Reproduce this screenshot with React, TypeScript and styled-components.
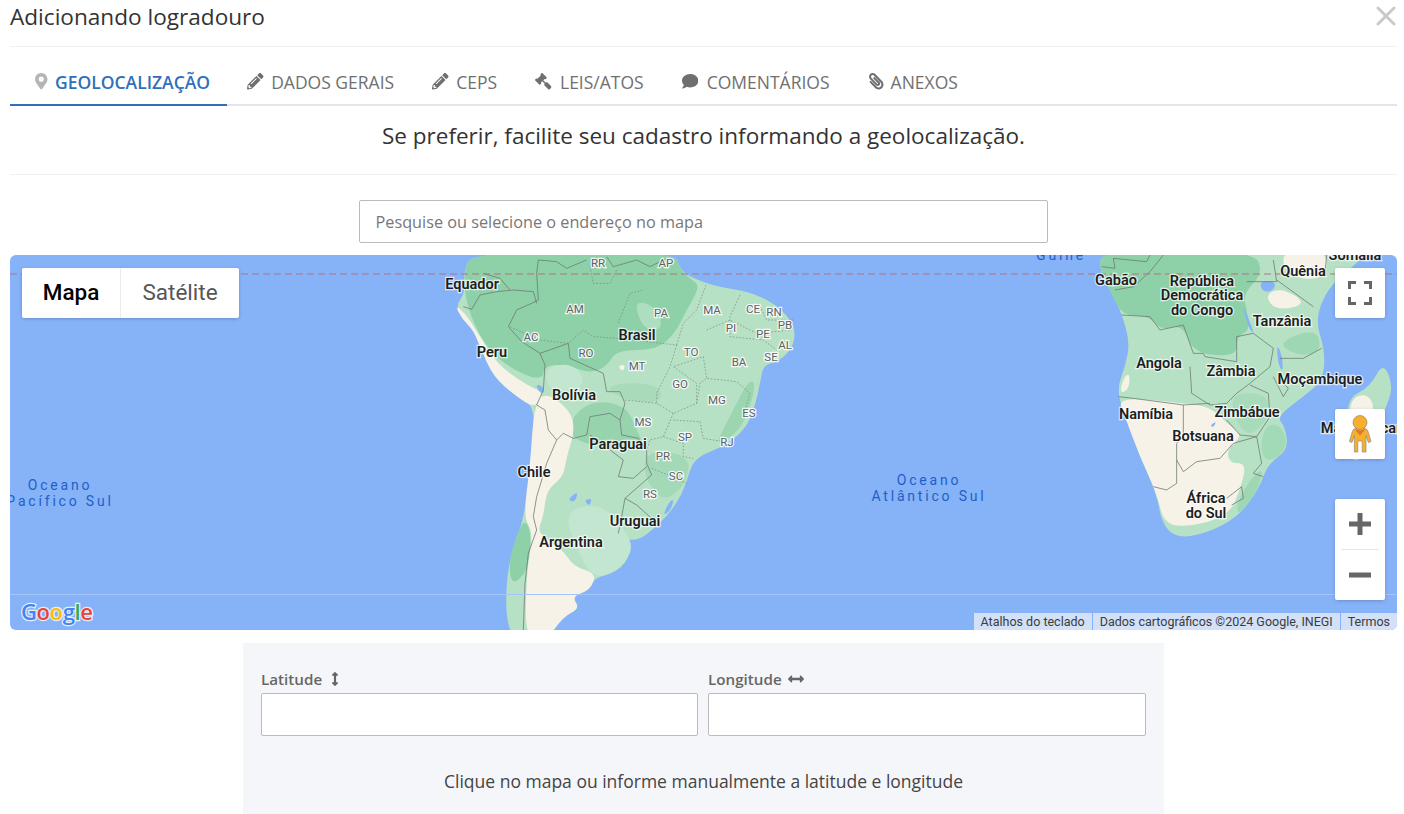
import * as React from 'react';
import styled, { createGlobalStyle } from 'styled-components';
import {
  FaMapMarkerAlt,
  FaPencilAlt,
  FaGavel,
  FaComment,
  FaPaperclip,
  FaArrowsAltV,
  FaArrowsAltH,
} from 'react-icons/fa';
import { X } from 'lucide-react';

const MirroredGavel = styled(FaGavel)`
  transform: scaleX(-1);
`;

const MirroredClip = styled(FaPaperclip)`
  transform: scaleX(-1);
`;

const tabs = [
  { label: 'Geolocalização', icon: <FaMapMarkerAlt />, iconBox: 22, active: true },
  { label: 'Dados gerais', icon: <FaPencilAlt />, iconBox: 24 },
  { label: 'Ceps', icon: <FaPencilAlt />, iconBox: 24 },
  { label: 'Leis/Atos', icon: <MirroredGavel />, iconBox: 25 },
  { label: 'Comentários', icon: <FaComment />, iconBox: 25 },
  { label: 'Anexos', icon: <MirroredClip />, iconBox: 23 },
];

const countries: [string, number, number][] = [
  ['Equador', 472, 284], ['Peru', 492, 352], ['Brasil', 637, 335], ['Bolívia', 574, 395],
  ['Paraguai', 618, 444], ['Chile', 534, 472], ['Uruguai', 635, 521], ['Argentina', 571, 542],
  ['Gabão', 1116, 280], ['República', 1202, 281], ['Democrática', 1202, 295], ['do Congo', 1202, 310],
  ['Quênia', 1303, 271], ['Somália', 1355, 255], ['Tanzânia', 1282, 321], ['Angola', 1159, 363],
  ['Zâmbia', 1231, 371], ['Moçambique', 1320, 379], ['Namíbia', 1146, 414], ['Zimbábue', 1247, 412],
  ['Botsuana', 1203, 436], ['África', 1206, 498], ['do Sul', 1206, 513], ['Madagascar', 1361, 428],
];

const states: [string, number, number][] = [
  ['RR', 598, 263], ['AP', 666, 263], ['AM', 575, 309], ['PA', 661, 313], ['MA', 712, 310],
  ['CE', 753, 309], ['RN', 774, 312], ['PB', 785, 325], ['PI', 731, 328], ['PE', 763, 334],
  ['AL', 785, 345], ['SE', 771, 357], ['AC', 531, 337], ['RO', 586, 353], ['TO', 691, 352],
  ['MT', 637, 366], ['BA', 739, 362], ['GO', 680, 384], ['MG', 717, 400], ['ES', 749, 413],
  ['MS', 643, 422], ['SP', 685, 437], ['RJ', 727, 442], ['PR', 663, 456], ['SC', 676, 476],
  ['RS', 650, 494],
];

const oceans: [string, number, number][] = [
  ['Oceano', 60, 485], ['Pacífico Sul', 60, 501], ['Oceano', 929, 480], ['Atlântico Sul', 929, 496],
];

// arredonda os cantos do poligono passando pelos pontos medios
const smooth = (points: string) => {
  const pts = points.split(' ').map((p) => p.split(',').map(Number));
  const mid = (a: number[], b: number[]) => [(a[0] + b[0]) / 2, (a[1] + b[1]) / 2];
  const start = mid(pts[pts.length - 1], pts[0]);
  let d = `M${start[0]} ${start[1]}`;
  pts.forEach((p, i) => {
    const m = mid(p, pts[(i + 1) % pts.length]);
    d += `Q${p[0]} ${p[1]} ${m[0]} ${m[1]}`;
  });
  return `${d}Z`;
};

const Land = ({ points, fill, opacity }: { points: string; fill: string; opacity?: number }) => (
  <path d={smooth(points)} fill={fill} fillOpacity={opacity} />
);

const FOREST = '#8ed1a8';
const GRASS = '#b7e1c5';
const PALE = '#c3e6d0';
const SAND = '#f6f2e7';
const WATER = '#86b2f7';

const App = () => {
  return (
    <>
      <GlobalStyle />
      <Page>
        <Header>
          <Title>Adicionando logradouro</Title>
          <CloseButton>
            <X size={32} strokeWidth={2.2} />
          </CloseButton>
        </Header>

        <TabBar>
          {tabs.map((tab) => (
            <Tab key={tab.label} $active={tab.active}>
              <TabIcon $box={tab.iconBox}>{tab.icon}</TabIcon>
              {tab.label}
            </Tab>
          ))}
        </TabBar>

        <Lead>Se preferir, facilite seu cadastro informando a geolocalização.</Lead>

        <SearchRow>
          <SearchInput placeholder="Pesquise ou selecione o endereço no mapa" />
        </SearchRow>

        <MapFrame>
          <MapDrawing />

          <MapTypeControl>
            <MapTypeButton $active>Mapa</MapTypeButton>
            <MapTypeButton>Satélite</MapTypeButton>
          </MapTypeControl>

          <FullscreenButton>
            <svg width="24" height="24" viewBox="0 0 24 24" fill="none" stroke="#666" strokeWidth="3">
              <path d="M1.5 8V1.5H8M16 1.5h6.5V8M22.5 16v6.5H16M8 22.5H1.5V16" />
            </svg>
          </FullscreenButton>

          <PegmanButton>
            <svg width="24" height="38" viewBox="0 0 24 38">
              <path
                d="M8 13.500h8c2.200 0 3.400 1 4 3l3 10-2.600 1-2.400-7V37h-3.800V26h-4.400v11H6.400V20.500l-2.400 7-2.600-1 3-10c.6-2 1.800-3 4-3z"
                fill="#f8b02c"
                stroke="#8f8a7c"
                strokeWidth="0.7"
              />
              <circle cx="12" cy="7.500" r="7" fill="#f8b02c" stroke="#8f8a7c" strokeWidth="0.7" />
              <path d="M6.500 14.200 12 20.500l5.500-6.300L12 15.500z" fill="#dc7a2c" />
            </svg>
          </PegmanButton>

          <ZoomControl>
            <ZoomButton>
              <svg width="24" height="24" viewBox="0 0 24 24" fill="#666">
                <path d="M9.500 1h5v8.500H23v5h-8.500V23h-5v-8.500H1v-5h8.500z" />
              </svg>
            </ZoomButton>
            <ZoomDivider />
            <ZoomButton>
              <svg width="24" height="24" viewBox="0 0 24 24" fill="#666">
                <path d="M1 9.500h22v5H1z" />
              </svg>
            </ZoomButton>
          </ZoomControl>

          <Attribution>
            <AttributionItem>Atalhos do teclado</AttributionItem>
            <AttributionItem>Dados cartográficos ©2024 Google, INEGI</AttributionItem>
            <AttributionItem>Termos</AttributionItem>
          </Attribution>
        </MapFrame>

        <CoordPanel>
          <CoordFields>
            <Field>
              <FieldLabel>
                Latitude <FaArrowsAltV size={14} />
              </FieldLabel>
              <TextInput />
            </Field>
            <Field>
              <FieldLabel>
                Longitude <FaArrowsAltH size={16} />
              </FieldLabel>
              <TextInput />
            </Field>
          </CoordFields>
          <Hint>Clique no mapa ou informe manualmente a latitude e longitude</Hint>
        </CoordPanel>
      </Page>
    </>
  );
};

const MapDrawing = () => (
  <MapSvg viewBox="10 255 1387 375">
    <rect x="10" y="255" width="1387" height="375" fill={WATER} />

    {/* America do Sul, coordenadas em 3x */}
    <g transform="translate(430 250) scale(0.33333)">
      <Land
        fill={GRASS}
        points="125,5 100,70 105,130 78,165 95,205 130,240 150,290 190,380 260,440 315,470 305,600 285,800 235,930 225,1090 250,1170 350,1170 400,1100 450,1075 425,1040 480,1020 490,985 565,965 605,910 565,860 620,875 680,830 735,770 770,700 790,625 880,590 945,540 975,470 990,400 1000,345 1045,335 1092,290 1095,225 1040,165 960,125 860,110 790,85 750,60 735,5"
      />
      <Land
        fill={FOREST}
        points="125,5 100,70 110,170 160,280 230,350 335,395 345,345 410,345 480,370 530,350 560,300 680,300 735,250 770,180 810,110 785,88 750,60 735,5"
      />
      <Land fill={FOREST} points="430,490 500,450 590,470 620,540 640,580 560,600 480,585 420,560" opacity={0.8} />
      <Land fill={FOREST} points="850,595 940,535 980,400 955,390 900,500" opacity={0.7} />
      <Land fill={FOREST} points="650,600 780,615 770,700 700,760 640,680" opacity={0.45} />
      <Land fill={FOREST} points="280,800 305,850 295,960 245,1010 235,930" />
      <Land fill={FOREST} points="530,420 590,450 680,460 700,430 660,400 560,400" opacity={0.4} />
      <Land fill={PALE} points="400,780 520,760 600,860 605,910 560,965 490,985 440,900" />
      <Land fill={PALE} points="350,350 430,340 470,400 400,430 350,410" />
      <Land fill={PALE} points="610,150 680,170 700,240 640,240" opacity={0.6} />
      <Land fill={SAND} points="75,165 95,205 130,240 150,290 190,380 260,440 315,475 345,430 280,400 200,340 150,260 110,195" />
      <Land
        fill={SAND}
        points="312,470 345,425 420,480 435,540 410,620 400,680 350,720 340,800 320,850 400,900 430,950 500,970 480,1020 425,1040 450,1075 400,1100 350,1170 285,1170 290,960 310,850 280,800 300,650"
      />
      <Land fill={GRASS} points="360,770 385,750 390,790 365,810" />
      <Land fill={SAND} points="568,345 585,345 582,362 568,358" />
      <Land fill={WATER} points="318,403 338,408 344,430 325,424" />
      <Land fill={WATER} points="462,750 487,745 478,770" />
      <Land fill={WATER} points="412,750 445,722 435,757" />
      <Land fill={WATER} points="715,760 732,745 722,782 698,798" />
      <NationBorders points="325,30 320,70 325,150 305,160 260,180 235,230 275,275 330,310 415,280 420,325 520,370 530,425 570,425 585,460 570,510 575,555 625,565 650,600 650,640 665,675 585,745 575,800 565,850" />
      <NationBorders points="100,170 125,178 150,135 200,125 250,120 310,125 320,160" />
      <NationBorders points="160,70 210,85 240,120" />
      <NationBorders points="330,310 345,345 340,420 320,465 345,480 355,540 380,570 400,550 430,565 470,555 480,500 540,490 570,510" />
      <NationBorders points="480,555 540,600 580,630 565,680 610,685 650,650" />
      <NationBorders points="380,570 350,640 320,740 310,800 320,840 295,910 285,1000 280,1140" />
      <NationBorders points="585,745 620,765 670,810" />
      <NationBorders points="325,30 380,35 410,55 470,30" />
      <NationBorders points="530,20 550,50 620,30 660,50 710,25" />
      <StateBorders points="565,220 600,130 640,120" />
      <StateBorders points="240,230 330,270 415,280 460,240 490,260 560,265 740,285" />
      <StateBorders points="740,285 760,220 800,180 830,100" />
      <StateBorders points="740,285 720,350 680,430 680,460 730,490 800,460 810,400 830,385 920,395 960,430 940,500" />
      <StateBorders points="730,490 700,560 660,570 650,600" />
      <StateBorders points="585,450 680,460" />
      <StateBorders points="700,560 760,580 760,620 790,625" />
      <StateBorders points="730,510 810,515 820,565 880,575" />
      <StateBorders points="800,460 800,400 730,350 820,320 830,385" />
      <StateBorders points="930,135 900,200 900,260 1000,270 1040,300" />
      <StateBorders points="985,160 1010,210 1090,210" />
      <StateBorders points="830,240 900,210 980,250 1085,240" />
      <StateBorders points="665,655 750,690 770,700" />
      <StateBorders points="480,50 490,100 540,100 560,60" />
    </g>

    {/* Africa */}
    <g transform="translate(1050 250) scale(0.33333)">
      <Land
        fill={GRASS}
        points="155,0 148,60 185,130 215,190 240,280 225,350 200,420 225,500 270,620 320,730 335,820 380,865 470,850 565,800 625,720 655,640 715,600 705,530 680,500 760,440 820,390 825,300 795,210 835,110 920,40 955,0"
      />
      <Land fill={FOREST} points="155,0 148,60 185,130 215,195 300,200 330,240 400,225 430,310 560,320 560,260 600,240 590,180 580,130 640,70 610,0" />
      <Land fill={FOREST} points="690,290 760,320 815,300 800,240 720,260" opacity={0.6} />
      <Land fill={FOREST} points="540,430 650,430 660,500 600,560 560,520" opacity={0.4} />
      <Land fill={FOREST} points="650,520 700,530 712,600 650,640 630,590" opacity={0.5} />
      <Land fill={FOREST} points="565,800 625,720 640,650 600,690 560,760" opacity={0.6} />
      <Land
        fill={SAND}
        points="202,440 400,460 480,470 530,520 580,555 530,600 540,640 590,640 570,720 540,790 450,825 345,830 320,730 270,620 225,500"
      />
      <Land fill={SAND} points="650,130 700,115 770,160 700,180 660,165" />
      <Land fill={SAND} points="700,0 830,0 830,80 760,90 700,60" />
      <Land fill={SAND} points="222,380 240,370 236,420 208,430" />
      <Land fill={GRASS} points="1000,335 1030,410 1005,480 975,560 930,635 895,625 890,500 900,440 960,410" />
      <Land fill={SAND} points="905,445 950,430 975,470 950,540 905,590 898,500" />
      <Land fill={WATER} points="628,93 677,93 672,122 638,127" />
      <Land fill={WATER} points="680,280 698,320 698,368 684,340" />
      <Land fill={WATER} points="578,170 585,180 614,252 598,240" />
      <Land fill={WATER} points="480,527 500,513 490,532" />
      <NationBorders points="155,50 195,55 190,25 240,30 290,35 300,15" />
      <NationBorders points="195,120 250,110 300,65 340,15" />
      <NationBorders points="215,195 300,200 330,240 400,225 430,310 460,310 465,320 560,335 560,260 610,250 670,295 660,350 600,400 560,430 530,460" />
      <NationBorders points="420,350 425,430 480,465 530,460" />
      <NationBorders points="205,440 250,445 400,465 480,460" />
      <NationBorders points="400,465 400,560 380,580 380,630 400,665 440,635 510,625 550,580 620,560 660,500 655,430 600,405" />
      <NationBorders points="380,630 380,700 350,720 310,710" />
      <NationBorders points="620,560 635,640 610,670 640,680" />
      <NationBorders points="530,510 570,555 620,560" />
      <NationBorders points="690,325 760,325 815,295" />
      <NationBorders points="680,90 790,170" />
      <NationBorders points="590,95 680,95 670,30" />
      <NationBorders points="830,15 825,70" />
      <NationBorders points="670,380 700,440 715,415 700,400" />
      <NationBorders points="530,745 575,710 580,745 545,765" />
    </g>

    <EquatorLine x1="10" y1="274" x2="1397" y2="274" />
    <TropicLine x1="10" y1="594.5" x2="1397" y2="594.5" />

    {oceans.map(([name, x, y]) => (
      <OceanLabel key={name} x={x} y={y}>
        {name}
      </OceanLabel>
    ))}
    <OceanLabel x={1061} y={255}>
      Guiné
    </OceanLabel>
    {states.map(([name, x, y]) => (
      <StateLabel key={name} x={x} y={y}>
        {name}
      </StateLabel>
    ))}
    {countries.map(([name, x, y]) => (
      <CountryLabel key={name} x={x} y={y}>
        {name}
      </CountryLabel>
    ))}

    <GoogleMark x="21" y="620">
      <tspan fill="#4285f4">G</tspan>
      <tspan fill="#ea4335">o</tspan>
      <tspan fill="#fbbc05">o</tspan>
      <tspan fill="#4285f4">g</tspan>
      <tspan fill="#34a853">l</tspan>
      <tspan fill="#ea4335">e</tspan>
    </GoogleMark>
  </MapSvg>
);

const GlobalStyle = createGlobalStyle`
  html, body {
    margin: 0;
    height: 814px;
    overflow: hidden;
    background: #fff;
    font-family: "Open Sans", sans-serif;
  }
`;

const Page = styled.div`
  padding: 0 7px 0 10px;
  color: #333;
`;

const Header = styled.div`
  display: flex;
  justify-content: space-between;
  height: 46px;
  border-bottom: 1px solid #f1f1f3;
`;

const Title = styled.h4`
  margin: 0;
  font-size: 22.6px;
  font-weight: 400;
  line-height: 34px;
  color: #333;
`;

const CloseButton = styled.div`
  color: #c9c9c9;
  height: 32px;
  margin-right: -5px;
`;

const TabBar = styled.div`
  display: flex;
  height: 57px;
  border-bottom: 2px solid #e4e5ea;
`;

const Tab = styled.div<{ $active?: boolean }>`
  display: flex;
  align-items: center;
  height: 59px;
  box-sizing: border-box;
  padding: 12px 19px 0;
  font-size: 17.5px;
  text-transform: uppercase;
  font-weight: ${(p) => (p.$active ? 600 : 400)};
  color: ${(p) => (p.$active ? '#2f6fbb' : '#707070')};
  border-bottom: 2px solid ${(p) => (p.$active ? '#2f6fbb' : 'transparent')};

  &:first-child {
    padding-left: 23px;
    padding-right: 17px;
  }

  &:nth-child(2) {
    padding-left: 20px;
  }
`;

const TabIcon = styled.span<{ $box: number }>`
  display: inline-flex;
  width: ${(p) => p.$box}px;
  font-size: 16.5px;
  color: #6f6f6f;

  ${Tab}:first-child & {
    color: #b5b5b5;
  }
`;

const Lead = styled.div`
  height: 69px;
  line-height: 60px;
  text-align: center;
  font-size: 22.5px;
  color: #333;
  border-bottom: 1px solid #eff0f2;
  box-sizing: border-box;
`;

const SearchRow = styled.div`
  display: flex;
  justify-content: center;
  padding: 25px 0 12px;
  margin-right: 1px;
`;

const SearchInput = styled.input`
  width: 689px;
  height: 43px;
  box-sizing: border-box;
  padding: 0 16px;
  border: 1px solid #bbb;
  border-radius: 2px;
  font-family: "Open Sans", sans-serif;
  font-size: 16.25px;

  &::placeholder {
    color: #777;
    opacity: 1;
  }
`;

const MapFrame = styled.div`
  position: relative;
  height: 375px;
  border-radius: 6px;
  overflow: hidden;
  font-family: Roboto, sans-serif;
`;

const MapSvg = styled.svg`
  display: block;
  width: 100%;
  height: 100%;
`;

const NationBorders = styled.polyline`
  fill: none;
  stroke: #6f7b75;
  stroke-width: 2.4;
`;

const StateBorders = styled.polyline`
  fill: none;
  stroke: #74837b;
  stroke-width: 2;
  stroke-dasharray: 5 5;
`;

const EquatorLine = styled.line`
  stroke: #b4737e;
  stroke-width: 1;
  stroke-dasharray: 7 4;
`;

const TropicLine = styled.line`
  stroke: #a4c5f9;
  stroke-width: 1;
`;

const CountryLabel = styled.text`
  font-family: Roboto, sans-serif;
  font-size: 14.5px;
  font-weight: 600;
  fill: #1c1e21;
  stroke: #fff;
  stroke-width: 2.5px;
  stroke-opacity: 0.7;
  paint-order: stroke;
  text-anchor: middle;
  dominant-baseline: central;
`;

const StateLabel = styled.text`
  font-family: Roboto, sans-serif;
  font-size: 11.5px;
  fill: #5b6165;
  stroke: #fff;
  stroke-width: 2.5px;
  stroke-opacity: 0.85;
  paint-order: stroke;
  text-anchor: middle;
  dominant-baseline: central;
`;

const OceanLabel = styled.text`
  font-family: Roboto, sans-serif;
  font-size: 14px;
  letter-spacing: 2.8px;
  fill: #1f5fc9;
  text-anchor: middle;
  dominant-baseline: central;
`;

const GoogleMark = styled.text`
  font-family: "Open Sans", sans-serif;
  font-size: 22px;
  font-weight: 600;
  letter-spacing: -0.4px;
  stroke: #e4eefc;
  stroke-width: 2.5px;
  paint-order: stroke;
`;

const MapControl = styled.div`
  position: absolute;
  display: flex;
  background: #fff;
  border-radius: 2px;
  box-shadow: rgba(0, 0, 0, 0.3) 0 1px 4px -1px;
`;

const MapTypeControl = styled(MapControl)`
  top: 13px;
  left: 12px;
  height: 50px;
`;

const MapTypeButton = styled.div<{ $active?: boolean }>`
  display: flex;
  align-items: center;
  justify-content: center;
  padding-bottom: 2px;
  box-sizing: border-box;
  width: ${(p) => (p.$active ? 99 : 118)}px;
  font-size: 22.5px;
  font-weight: ${(p) => (p.$active ? 500 : 400)};
  color: ${(p) => (p.$active ? '#000' : '#565656')};
  border-right: ${(p) => (p.$active ? '1px solid #ebebeb' : 'none')};
`;

const IconControl = styled(MapControl)`
  right: 12px;
  width: 50px;
  height: 50px;
  align-items: center;
  justify-content: center;
`;

const FullscreenButton = styled(IconControl)`
  top: 13px;
`;

const PegmanButton = styled(IconControl)`
  top: 154px;
`;

const ZoomControl = styled(MapControl)`
  top: 244px;
  right: 12px;
  width: 50px;
  height: 101px;
  flex-direction: column;
  align-items: center;
`;

const ZoomButton = styled.div`
  display: flex;
  align-items: center;
  justify-content: center;
  height: 50px;
`;

const ZoomDivider = styled.div`
  width: 38px;
  height: 1px;
  background: #e6e6e6;
`;

const Attribution = styled.div`
  position: absolute;
  right: 0;
  bottom: 0;
  display: flex;
  height: 17px;
  font-size: 12.5px;
  line-height: 18px;
  color: #3c3c3c;
  background: #d2e0f8;
`;

const AttributionItem = styled.div`
  padding: 0 7px;

  & + & {
    border-left: 1px solid #86b2f7;
  }
`;

const CoordPanel = styled.div`
  width: 921px;
  height: 171px;
  box-sizing: border-box;
  margin: 13px 0 0 233px;
  padding: 27px 18px 0;
  background: #f5f6fa;
`;

const CoordFields = styled.div`
  display: grid;
  grid-template-columns: 437px 438px;
  gap: 10px;
`;

const Field = styled.div`
  display: flex;
  flex-direction: column;
`;

const FieldLabel = styled.label`
  display: flex;
  align-items: center;
  gap: 6px;
  height: 18px;
  margin-bottom: 5px;
  font-size: 15.2px;
  font-weight: 600;
  color: #666;
`;

const TextInput = styled.input`
  height: 43px;
  box-sizing: border-box;
  border: 1px solid #bbb;
  border-radius: 2px;
  background: #fff;
`;

const Hint = styled.div`
  margin-top: 32px;
  line-height: 26px;
  text-align: center;
  font-size: 17.5px;
  color: #444;
`;

export default App;
